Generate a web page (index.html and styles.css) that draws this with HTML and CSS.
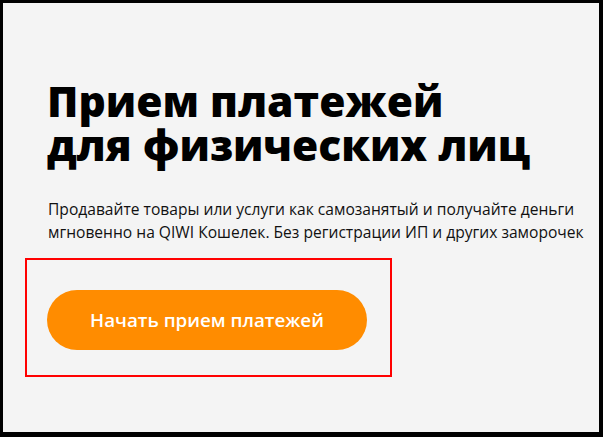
FILE: index.html
```html
<!DOCTYPE html>
<html lang="ru">
<head>
<meta charset="utf-8">
<link rel="stylesheet" href="styles.css">
</head>
<body>
<main class="frame">
  <section class="hero">
    <h1 class="hero-title">Прием платежей<br>для физических лиц</h1>
    <p class="hero-text">Продавайте товары или услуги как самозанятый и получайте деньги<br>мгновенно на QIWI Кошелек. Без регистрации ИП и других заморочек</p>
    <div class="cta-box">
      <a class="cta-button" href="#">Начать прием платежей</a>
    </div>
  </section>
</main>
</body>
</html>
```

FILE: styles.css
```css
html, body {
  margin: 0;
  padding: 0;
  background: #000;
}
body {
  width: 603px;
  height: 437px;
  overflow: hidden;
}
.frame {
  margin: 3px 4px 0 3px;
  height: 429px;
  background: #f4f4f4;
  box-sizing: border-box;
  padding: 76px 0 0 22px;
}
.hero-title {
  margin: 0 0 0 22px;
  font-family: "Open Sans", sans-serif;
  font-weight: 800;
  font-size: 42.5px;
  line-height: 44px;
  color: #000;
  letter-spacing: 0;
}
.hero-text {
  margin: 31px 0 0 23px;
  font-family: "Open Sans", sans-serif;
  font-size: 15.6px;
  line-height: 23px;
  color: #111;
}
.cta-box {
  margin-top: 14px;
  width: 363px;
  height: 115px;
  border: 2px solid #ff0000;
  box-sizing: content-box;
  padding: 0;
  display: flex;
  align-items: flex-start;
}
.cta-button {
  margin: 30px 0 0 20px;
  width: 320px;
  height: 60px;
  border-radius: 30px;
  background: #ff8c00;
  color: #fff;
  font-family: "Open Sans", sans-serif;
  font-weight: 600;
  font-size: 18.8px;
  text-decoration: none;
  display: flex;
  align-items: center;
  justify-content: center;
}
```
